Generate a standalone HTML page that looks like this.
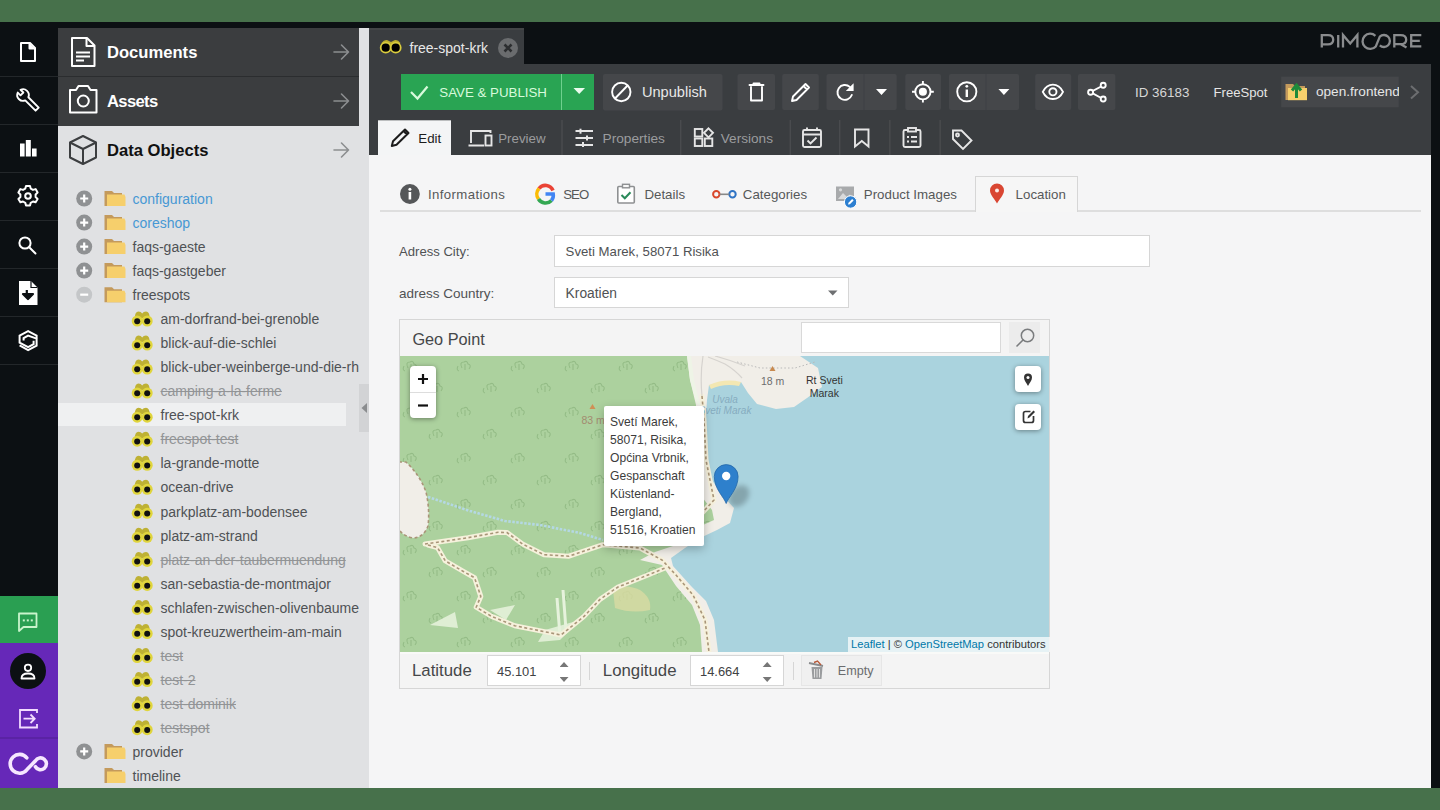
<!DOCTYPE html>
<html><head><meta charset="utf-8">
<style>
*{box-sizing:border-box;margin:0;padding:0}
html,body{width:1440px;height:810px;overflow:hidden}
body{position:relative;background:#47714b;font-family:"Liberation Sans",sans-serif;}
.a{position:absolute}
#frame{left:0;top:22px;width:1440px;height:766px;background:#0c1013}
/* sidebar */
.sep{position:absolute;left:0;width:58px;height:1px;background:#23272a}
/* tree panel */
.ph{position:absolute;left:58px;width:301px;height:48px;background:#3b3d3f;color:#fff;font-weight:bold;font-size:16.6px}
.ph span{position:absolute;left:49px;top:15px}
.arr{position:absolute;left:276px;top:15px}
#tree{left:58px;top:28px;width:311px;height:760px;background:#e0e1e3}
.row{position:absolute;left:0;height:24px;width:288px;font-size:14.1px;color:#505355;white-space:nowrap}
.row span{position:absolute;top:4px}
.del{color:#929496;text-decoration:line-through}
.lnk{color:#4797d3}
.tt{position:absolute;font-size:14px;color:#4f5255;white-space:nowrap;line-height:16px}
.tt.lnk{color:#4798d4}
.tt.del{color:#929496;text-decoration:line-through}
</style></head><body>
<div id="frame" class="a"></div>

<!-- LEFT SIDEBAR -->
<div class="a" style="left:0;top:22px;width:58px;height:766px;background:#0c1013"></div>
<div class="sep" style="top:76px"></div>
<div class="sep" style="top:124px"></div>
<div class="sep" style="top:172px"></div>
<div class="sep" style="top:220px"></div>
<div class="sep" style="top:268px"></div>
<div class="sep" style="top:316px"></div>
<div class="sep" style="top:364px"></div>

<svg class="a" style="left:0;top:22px" width="58" height="350" viewBox="0 22 58 350">
 <g fill="none" stroke="#fff" stroke-width="2" stroke-linejoin="round" stroke-linecap="round">
  <!-- doc -->
  <path d="M21 43 H30 L35 48 V61 H21 Z"/>
  <path d="M29.5 43.5 V48.5 H34.5" fill="#fff"/>
  <!-- wrench -->
  <path d="M28.36 97.24 L38.7 107.58 L35.58 110.7 L25.24 100.36 A5.8 5.8 0 0 1 17.74 92.56 L20.53 95.35 L23.35 92.53 L20.56 89.74 A5.8 5.8 0 0 1 28.36 97.24 Z" stroke-width="1.9"/>
  <!-- gear -->
  <circle cx="28" cy="196" r="2.8"/>
  <path d="M26 186 h4 l0.7 2.6 l2.3 1.3 l2.6 -0.8 l2 3.4 l-2 1.9 v2.6 l2 1.9 l-2 3.4 l-2.6 -0.8 l-2.3 1.3 l-0.7 2.6 h-4 l-0.7 -2.6 l-2.3 -1.3 l-2.6 0.8 l-2 -3.4 l2 -1.9 v-2.6 l-2 -1.9 l2 -3.4 l2.6 0.8 l2.3 -1.3 z"/>
  <!-- search -->
  <circle cx="25" cy="243" r="5.6"/>
  <path d="M29.2 247.2 L35.5 253.5"/>
  <!-- layers -->
  <path d="M36.6 338.2 V335.6 L28.1 331.2 L19.6 335.6 V342.7 L28.1 347.1 L33.6 344.1 V340.8" stroke-width="2" stroke-linejoin="miter" stroke-linecap="butt"/>
  <path d="M19.6 345.3 L28.1 350.1 L36.6 345.6 V338.6 L28.1 335.6 L23.6 338.2 V340.4" stroke-width="2" stroke-linejoin="miter" stroke-linecap="butt"/>
 </g>
 <g fill="#fff">
  <rect x="20" y="143.5" width="4.6" height="13"/>
  <rect x="25.8" y="140" width="5" height="16.5"/>
  <rect x="32" y="148.5" width="4.6" height="8"/>
  <path d="M19 281 H31 L37.5 287.5 V305 H19 Z"/>
 </g>
 <path d="M31 281 V287.5 H37.5" fill="none" stroke="#0c1013" stroke-width="1.2"/>
 <path d="M26.8 290 V297 M23 294 L28 299 L33 294 Z" stroke="#0c1013" stroke-width="2.2" fill="#0c1013" stroke-linejoin="round"/>
</svg>

<!-- sidebar bottom -->
<div class="a" style="left:0;top:596px;width:58px;height:47px;background:#2a9f52"></div>
<div class="a" style="left:0;top:643px;width:58px;height:145px;background:#6628b8"></div>
<div class="a" style="left:0;top:737px;width:58px;height:2px;background:#5a23a4"></div>
<svg class="a" style="left:0;top:596px" width="58" height="192" viewBox="0 596 58 192">
 <path d="M19 613.5 H36.5 V627 H23.5 L19 631 Z" fill="none" stroke="#c9f4cc" stroke-width="1.8" stroke-linejoin="round"/>
 <g fill="#c9f4cc"><rect x="22.8" y="619.4" width="2" height="2"/><rect x="26.8" y="619.4" width="2" height="2"/><rect x="30.8" y="619.4" width="2" height="2"/></g>
 <circle cx="28" cy="671" r="18" fill="#0c1013"/>
 <circle cx="28" cy="667.8" r="3.2" fill="none" stroke="#fff" stroke-width="1.8"/>
 <path d="M21.5 678.5 Q21.5 673.5 28 673.5 Q34.5 673.5 34.5 678.5 Z" fill="none" stroke="#fff" stroke-width="1.8" stroke-linejoin="round"/>
 <path d="M37 713 V710 H20 V727.5 H37 V724" fill="none" stroke="#f3dcff" stroke-width="1.8"/>
 <path d="M23.5 718.7 H34.5 M30.5 714.5 L34.7 718.7 L30.5 723" fill="none" stroke="#f3dcff" stroke-width="1.8"/>
 <path d="M26.8 757.8 A9.4 9.4 0 1 0 26.8 769.8 L35.4 760.85 A5.9 5.9 0 1 1 35.4 766.75" fill="none" stroke="#f6e6ff" stroke-width="3.6" stroke-linecap="round"/>
</svg>

<!-- TREE PANEL -->
<div id="tree" class="a"></div>
<div class="ph" style="top:28px"><span>Documents</span></div>
<div class="a" style="left:58px;top:76px;width:301px;height:1px;background:#2b2d2f"></div>
<div class="ph" style="top:77px;height:49px"><span style="top:15px;letter-spacing:-0.65px">Assets</span></div>
<div class="ph" style="top:126px;background:transparent;color:#111"><span>Data Objects</span></div>


<svg class="a" style="left:58px;top:28px" width="301" height="146" viewBox="58 28 301 146">
 <g fill="none" stroke="#fff" stroke-width="2" stroke-linejoin="round">
  <path d="M72 38 H87 L94.5 45.5 V66 H72 Z"/>
  <path d="M86.5 38.5 V46 H94" />
  <path d="M76 52.5 H90 M76 56.5 H90 M76 60.5 H84" stroke-width="1.8"/>
  <path d="M70 90 H76 L78.5 86 H88 L90.5 90 H96.5 V112.5 H70 Z"/>
  <circle cx="83.3" cy="101" r="5.5"/>
 </g>
 <g fill="none" stroke="#3c3e40" stroke-width="2" stroke-linejoin="round">
  <path d="M83 136 L96 142.5 V157.5 L83 164 L70 157.5 V142.5 Z"/>
  <path d="M70 142.5 L83 149 L96 142.5 M83 149 V164"/>
 </g>
 <g fill="none" stroke="#8c8e90" stroke-width="1.6" stroke-linecap="round" stroke-linejoin="round">
  <path d="M334 52 H348.5 M341.5 45 L348.5 52 L341.5 59"/>
  <path d="M334 101 H348.5 M341.5 94 L348.5 101 L341.5 108"/>
  <path d="M334 150 H348.5 M341.5 143 L348.5 150 L341.5 157"/>
 </g>
</svg>
<!-- collapse handle -->
<div class="a" style="left:359px;top:384px;width:10px;height:48px;background:#d2d3d5"></div>
<svg class="a" style="left:359px;top:384px" width="10" height="48"><path d="M8 19 L2.5 24 L8 29 Z" fill="#8a8c8e"/></svg>
<!--TREE-->
<!-- MAIN TOP -->
<div class="a" style="left:369px;top:28px;width:155px;height:36px;background:#3a3d40;border-top:2px solid #434547"></div>
<div class="a" style="left:369px;top:64px;width:1062px;height:91px;background:#3a3d40"></div>
<div class="a" style="left:369px;top:155px;width:1062px;height:633px;background:#f5f5f6"></div>
<div class="a" style="left:409.5px;top:40px;font-size:14px;color:#e8e8e8;line-height:16px">free-spot-krk</div>
<svg class="a" style="left:369px;top:28px" width="1062" height="127" viewBox="369 28 1062 127">
 <path d="M381.5 43 Q385 38.5 389 41 L391 42 L393 41 Q397 38.5 400.5 43 L399 45 H383 Z" fill="#bdae2e"/>
 <circle cx="385.7" cy="47.7" r="5" fill="#000" stroke="#dacd3e" stroke-width="1.8"/>
 <circle cx="395.7" cy="47.7" r="5" fill="#000" stroke="#dacd3e" stroke-width="1.8"/>
 <circle cx="508" cy="48" r="10" fill="#6a6c6e"/>
 <path d="M504.5 44.5 L511.5 51.5 M511.5 44.5 L504.5 51.5" stroke="#2c2e30" stroke-width="2.6"/>
 <!-- buttons -->
 <rect x="401" y="74" width="193" height="36" fill="#29a453"/>
 <rect x="561" y="74" width="1" height="36" fill="#6fd08e"/>
 <path d="M411 92 L417.5 98.5 L427.5 86.5" fill="none" stroke="#d8fadc" stroke-width="2.2"/>
 <path d="M573.5 88 H585 L579.2 94 Z" fill="#eafbee"/>
 <rect x="603" y="74" width="119.5" height="36.5" rx="2" fill="#45474a"/>
 <circle cx="621.3" cy="92" r="9.2" fill="none" stroke="#fff" stroke-width="1.9"/>
 <path d="M615 98.5 L627.6 85.5" stroke="#fff" stroke-width="1.9"/>
 <rect x="737.5" y="74" width="37.5" height="36" rx="2" fill="#45474a"/>
 <rect x="782.2" y="74" width="36.6" height="36" rx="2" fill="#45474a"/>
 <rect x="826.5" y="74" width="70.2" height="36" rx="2" fill="#45474a"/>
 <rect x="905.3" y="74" width="35.7" height="36" rx="2" fill="#45474a"/>
 <rect x="949" y="74" width="70" height="36" rx="2" fill="#45474a"/>
 <rect x="1035.2" y="74" width="36" height="36" rx="2" fill="#45474a"/>
 <rect x="1078" y="74" width="37.4" height="36" rx="2" fill="#45474a"/>
 <rect x="863.5" y="74" width="1" height="36" fill="#3f4144"/><rect x="985.5" y="74" width="1" height="36" fill="#3f4144"/>
 <rect x="1281.2" y="76.6" width="117.5" height="30.7" fill="#45474a"/>
 <g fill="none" stroke="#fff" stroke-width="1.9" stroke-linejoin="round" stroke-linecap="round">
  <path d="M749.5 85 H763.5 M753.5 85 V83.5 H759.5 V85"/>
  <path d="M751 87 V100.5 H762 V87"/>
  <path d="M792 101 L793 96.5 L805.5 84 L809 87.5 L796.5 100 Z M803.5 86 L807 89.5"/>
  <path d="M851.8 95 A7.4 7.4 0 1 1 849.8 86.9"/>
 </g>
 <path d="M853.6 83.2 V91 H845.8 Z" fill="#fff"/>
 <path d="M876 89 H887 L881.5 95 Z M998.4 89 H1009.4 L1003.9 95 Z" fill="#fff"/>
 <g fill="none" stroke="#fff" stroke-width="1.9">
  <circle cx="922.9" cy="91.8" r="7.6"/>
  <path d="M922.9 81 V84.5 M922.9 99 V102.5 M912 91.8 H915.5 M930.3 91.8 H933.8"/>
  <circle cx="966.8" cy="91.8" r="9.6"/>
  <path d="M1042.8 91.8 C1047.5 82.2 1058.3 82.2 1063 91.8 C1058.3 101.4 1047.5 101.4 1042.8 91.8 Z"/>
  <circle cx="1052.9" cy="91.8" r="3.6"/>
  <path d="M1090.5 92.2 L1103 85.5 M1090.5 92.2 L1103 99"/>
 </g>
 <circle cx="922.9" cy="91.8" r="4" fill="#fff"/>
 <path d="M966.8 89.5 V97" stroke="#fff" stroke-width="2.4"/>
 <circle cx="966.8" cy="86.3" r="1.4" fill="#fff"/>
 <g fill="#45474a" stroke="#fff" stroke-width="1.9">
  <circle cx="1103.2" cy="85.3" r="2.5"/><circle cx="1090.6" cy="92.2" r="2.5"/><circle cx="1103.2" cy="99" r="2.5"/>
 </g>
 <!-- open.frontend folder -->
 <path d="M1285.5 84 H1293 L1295 86 H1305 V100 H1285.5 Z" fill="#c49a5c"/>
 <path d="M1288 88 H1307 V100.2 H1288 Z" fill="#f6cf6c"/>
 <path d="M1296.5 98 V86.5 M1292 90.5 L1296.5 85 L1301 90.5" stroke="#1e8a3a" stroke-width="3" fill="none"/>
 <path d="M1411 86 L1418 92.3 L1411 98.6" fill="none" stroke="#6c6e70" stroke-width="2"/>
 <!-- tabs row -->
 <rect x="378" y="120.3" width="73" height="35" fill="#f4f5f6"/>
 <g fill="#505254"><rect x="561.5" y="120" width="1" height="35"/><rect x="680.3" y="120" width="1" height="35"/><rect x="789.7" y="120" width="1" height="35"/><rect x="839.3" y="120" width="1" height="35"/><rect x="889.4" y="120" width="1" height="35"/><rect x="939.6" y="120" width="1" height="35"/></g>
 <g fill="none" stroke="#1c1c1c" stroke-width="2" stroke-linejoin="round">
  <path d="M391.8 146 L393 141.3 L405 129.5 L408.5 133 L396.5 144.8 Z M403.5 131 L407 134.5"/>
 </g>
 <g fill="none" stroke="#e6e6e6" stroke-width="1.9">
  <path d="M471 143 V131 H490.5 V133 M468.5 145.5 H484"/>
  <rect x="485.5" y="135.5" width="6" height="10"/>
  <path d="M575.5 131 H593 M575.5 138 H593 M575.5 145 H593"/>
  <rect x="694.8" y="138.5" width="7.5" height="7.5"/><rect x="704.8" y="138.5" width="7.5" height="7.5"/><rect x="694.8" y="129" width="7.5" height="7.5"/>
  <path d="M708.5 128.3 L713 132.8 L708.5 137.3 L704 132.8 Z"/>
  <rect x="803" y="130" width="18" height="17" rx="1.5"/><path d="M803 134.5 H821 M807 127.5 V131 M817 127.5 V131 M807.5 140.5 L810.5 143.5 L816.5 137.5"/>
  <path d="M855 129.5 H868.5 V146.5 L861.8 141 L855 146.5 Z"/>
  <rect x="903.5" y="130" width="17" height="17" rx="1.5"/><rect x="908" y="128" width="8" height="3.5" fill="#3b3d3f"/><path d="M907 137 H909 M911 137 H917 M907 141.5 H909 M911 141.5 H917"/>
  <path d="M953 130.5 H961.5 L971.5 140.5 L963 149 L953 139 Z"/><circle cx="957.5" cy="135" r="1.5"/>
 </g>
 <g fill="#e6e6e6"><rect x="579.5" y="128.7" width="2" height="5"/><rect x="586" y="135.5" width="2" height="5"/><rect x="582" y="142" width="2" height="5"/></g>
</svg>
<div class="a" style="left:439.3px;top:84.5px;font-size:13.3px;color:#d8fadc;line-height:16px">SAVE &amp; PUBLISH</div>
<div class="a" style="left:641.9px;top:84px;font-size:14.6px;color:#e8e8e8;line-height:16px">Unpublish</div>
<div class="a" style="left:1135px;top:84.5px;font-size:13.4px;color:#d6d6d6;line-height:16px">ID 36183</div>
<div class="a" style="left:1213.6px;top:84.5px;font-size:13.1px;color:#e6e6e6;line-height:16px">FreeSpot</div>
<div class="a" style="left:1281px;top:76px;width:117.7px;height:31px;overflow:hidden"><div class="a" style="left:35px;top:8px;font-size:13.6px;color:#e6e6e6;line-height:16px;white-space:nowrap">open.frontend.shop</div></div>
<div class="a" style="left:418.3px;top:131px;font-size:13.3px;color:#1c1c1c;line-height:16px">Edit</div>
<div class="a" style="left:498.2px;top:131px;font-size:13.3px;color:#9a9c9e;line-height:16px">Preview</div>
<div class="a" style="left:602.5px;top:131px;font-size:13.7px;color:#9a9c9e;line-height:16px">Properties</div>
<div class="a" style="left:720.8px;top:131px;font-size:13.6px;color:#9a9c9e;line-height:16px">Versions</div>
<!-- PIMCORE logo -->
<svg class="a" style="left:1310px;top:26px" width="120" height="30" viewBox="0 0 120 30">
 <g fill="none" stroke="#8a8c8e" stroke-width="2.3">
  <path d="M11.8 21.5 V9.2 H18 Q23.2 9.2 23.2 13.8 Q23.2 18.4 18 18.4 H11.8"/>
  <path d="M28.2 9 V21.5"/>
  <path d="M33 21.5 V9 L40.2 17.5 L47.4 9 V21.5"/>
  <path d="M65.4 9.8 A7.6 7.6 0 1 0 65.8 20.4 L69.8 10.6 A6 6 0 1 1 69.8 19.4"/>
  <path d="M84.3 21.5 V9.2 H90.5 Q96.2 9.2 96.2 13.7 Q96.2 18.2 90.5 18.2 H84.3 M90.8 18.2 L96.5 21.5"/>
  <path d="M111.3 9.2 H101.2 V20.4 H111.3 M101.2 14.8 H109.8"/>
 </g>
</svg>

<div class="a" style="left:0;top:0;width:359px;height:788px;overflow:hidden">
<div class="a" style="left:58px;top:403.4px;width:288px;height:23px;background:#eff0f1"></div>
<div class="tt lnk" style="left:132.5px;top:191.00px">configuration</div>
<div class="tt lnk" style="left:132.5px;top:215.04px">coreshop</div>
<div class="tt " style="left:132.5px;top:239.08px">faqs-gaeste</div>
<div class="tt " style="left:132.5px;top:263.12px">faqs-gastgeber</div>
<div class="tt " style="left:132.5px;top:287.16px">freespots</div>
<div class="tt " style="left:160.5px;top:311.20px">am-dorfrand-bei-grenoble</div>
<div class="tt " style="left:160.5px;top:335.24px">blick-auf-die-schlei</div>
<div class="tt " style="left:160.5px;top:359.28px">blick-uber-weinberge-und-die-rhein</div>
<div class="tt del" style="left:160.5px;top:383.32px">camping-a-la-ferme</div>
<div class="tt " style="left:160.5px;top:407.36px">free-spot-krk</div>
<div class="tt del" style="left:160.5px;top:431.40px">freespot-test</div>
<div class="tt " style="left:160.5px;top:455.44px">la-grande-motte</div>
<div class="tt " style="left:160.5px;top:479.48px">ocean-drive</div>
<div class="tt " style="left:160.5px;top:503.52px">parkplatz-am-bodensee</div>
<div class="tt " style="left:160.5px;top:527.56px">platz-am-strand</div>
<div class="tt del" style="left:160.5px;top:551.60px">platz-an-der-taubermuendung</div>
<div class="tt " style="left:160.5px;top:575.64px">san-sebastia-de-montmajor</div>
<div class="tt " style="left:160.5px;top:599.68px">schlafen-zwischen-olivenbaumer</div>
<div class="tt " style="left:160.5px;top:623.72px">spot-kreuzwertheim-am-main</div>
<div class="tt del" style="left:160.5px;top:647.76px">test</div>
<div class="tt del" style="left:160.5px;top:671.80px">test-2</div>
<div class="tt del" style="left:160.5px;top:695.84px">test-dominik</div>
<div class="tt del" style="left:160.5px;top:719.88px">testspot</div>
<div class="tt " style="left:132.5px;top:743.92px">provider</div>
<div class="tt " style="left:132.5px;top:767.96px">timeline</div>
</div>
<svg class="a" style="left:0;top:0" width="370" height="810">
<defs>
<g id="plus"><circle cx="84.2" cy="11.5" r="8" fill="#8f9193"/><path d="M84.2 7.5v8M80.2 11.5h8" stroke="#fff" stroke-width="2.2"/></g>
<g id="minus"><circle cx="84.2" cy="11.5" r="8" fill="#c4c6c8"/><path d="M80.2 11.5h8" stroke="#fff" stroke-width="2.2"/></g>
<g id="folder"><path d="M104.5 4 H112 L114 6 H122 V19 H104.5 Z" fill="#c49a5c"/><path d="M107 7.5 H124.5 L125.5 10 V19 H107 Z" fill="#f6cf6c"/></g>
<g id="bino"><path d="M134.8 11 Q134.8 4.3 138.5 4.3 Q141 4.3 142.2 6.2 Q143.4 4.3 146 4.3 Q149.7 4.3 149.7 11 Z" fill="#beb134"/><circle cx="137.2" cy="13.8" r="5.5" fill="#e0d53c"/><circle cx="147.2" cy="13.8" r="5.5" fill="#e0d53c"/><circle cx="137.2" cy="14" r="3" fill="#111"/><circle cx="147.2" cy="14" r="3" fill="#111"/></g>
</defs>
<use href="#plus" y="187.00"/>
<use href="#folder" y="187.00"/>
<use href="#plus" y="211.04"/>
<use href="#folder" y="211.04"/>
<use href="#plus" y="235.08"/>
<use href="#folder" y="235.08"/>
<use href="#plus" y="259.12"/>
<use href="#folder" y="259.12"/>
<use href="#minus" y="283.16"/>
<use href="#folder" y="283.16"/>
<use href="#bino" y="307.20"/>
<use href="#bino" y="331.24"/>
<use href="#bino" y="355.28"/>
<use href="#bino" y="379.32"/>
<use href="#bino" y="403.36"/>
<use href="#bino" y="427.40"/>
<use href="#bino" y="451.44"/>
<use href="#bino" y="475.48"/>
<use href="#bino" y="499.52"/>
<use href="#bino" y="523.56"/>
<use href="#bino" y="547.60"/>
<use href="#bino" y="571.64"/>
<use href="#bino" y="595.68"/>
<use href="#bino" y="619.72"/>
<use href="#bino" y="643.76"/>
<use href="#bino" y="667.80"/>
<use href="#bino" y="691.84"/>
<use href="#bino" y="715.88"/>
<use href="#plus" y="739.92"/>
<use href="#folder" y="739.92"/>
<use href="#folder" y="763.96"/>
</svg>

<!-- CONTENT -->
<div class="a" style="left:380px;top:210px;width:1041px;height:2px;background:#dedede"></div>
<div class="a" style="left:974.5px;top:176px;width:103.5px;height:36px;background:#f6f6f6;border:1px solid #d6d6d6;border-bottom:none"></div>
<svg class="a" style="left:369px;top:160px" width="720" height="60" viewBox="369 160 720 60">
 <circle cx="409.9" cy="194" r="9.9" fill="#555759"/>
 <circle cx="409.9" cy="189.3" r="1.5" fill="#fff"/><rect x="408.6" y="192" width="2.6" height="7.5" fill="#fff"/>
 <g fill="none" stroke-width="3.6">
  <path d="M553 190.5 A8.2 8.2 0 0 0 539 188.5" stroke="#ea4335"/>
  <path d="M539 188.5 A8.2 8.2 0 0 0 538.5 199" stroke="#fbbc05"/>
  <path d="M538.5 199 A8.2 8.2 0 0 0 551.5 200.5" stroke="#34a853"/>
  <path d="M551.5 200.5 A8.2 8.2 0 0 0 553.2 194 H545.5" stroke="#4285f4"/>
 </g>
 <rect x="617.8" y="186.5" width="16.5" height="16.5" rx="1" fill="#fff" stroke="#8e9092" stroke-width="1.6"/>
 <rect x="622.5" y="184.3" width="7" height="3.5" fill="#f6f6f6" stroke="#8e9092" stroke-width="1.4"/>
 <path d="M621.5 195 L624.8 198.3 L630.5 192.2" fill="none" stroke="#2a8a5a" stroke-width="2"/>
 <circle cx="716.3" cy="194.3" r="3.2" fill="none" stroke="#d9472b" stroke-width="2"/>
 <circle cx="732.5" cy="194.3" r="3.2" fill="none" stroke="#2f73c4" stroke-width="2"/>
 <path d="M719.5 194.3 H729.3" stroke="#888" stroke-width="1.6"/>
 <rect x="836" y="186.5" width="18" height="14.5" fill="#a8aaac"/>
 <path d="M838 199 L843 193 L847 197 L850 194.5 L853 199 Z" fill="#d9dadb"/><circle cx="840.5" cy="189.8" r="1.6" fill="#d9dadb"/>
 <circle cx="850.6" cy="202" r="6.2" fill="#2c7fd1" stroke="#fff" stroke-width="1"/>
 <path d="M848 204.6 L848.5 202.8 L852.2 199.1 L853.6 200.5 L849.9 204.2 Z" fill="#fff"/>
 <path d="M997 203.5 C995 199.5 990 195 990 190.5 A7 7 0 0 1 1004 190.5 C1004 195 999 199.5 997 203.5 Z" fill="#d94632"/>
 <circle cx="997" cy="190.5" r="2" fill="#fbeae6"/>
</svg>
<div class="a" style="left:427.9px;top:187px;font-size:13.2px;letter-spacing:0.4px;color:#565859;line-height:16px">Informations</div>
<div class="a" style="left:563.3px;top:187px;font-size:13.2px;letter-spacing:-1px;color:#565859;line-height:16px">SEO</div>
<div class="a" style="left:644.4px;top:187px;font-size:13.3px;color:#565859;line-height:16px">Details</div>
<div class="a" style="left:742.8px;top:187px;font-size:13.3px;color:#565859;line-height:16px">Categories</div>
<div class="a" style="left:863.8px;top:187px;font-size:13.3px;color:#565859;line-height:16px">Product Images</div>
<div class="a" style="left:1015.6px;top:187px;font-size:13.3px;color:#565859;line-height:16px">Location</div>

<div class="a" style="left:399px;top:243.5px;font-size:13.1px;color:#505254;line-height:16px">Adress City:</div>
<div class="a" style="left:399px;top:285.5px;font-size:13.5px;color:#505254;line-height:16px">adress Country:</div>
<div class="a" style="left:554.4px;top:235px;width:596px;height:31.6px;background:#fff;border:1px solid #d6d6d6"></div>
<div class="a" style="left:565.6px;top:244px;font-size:13.2px;color:#505254;line-height:16px">Sveti Marek, 58071 Risika</div>
<div class="a" style="left:554.4px;top:277.2px;width:295px;height:31.3px;background:#fff;border:1px solid #d6d6d6"></div>
<div class="a" style="left:565.6px;top:286px;font-size:13.8px;color:#505254;line-height:16px">Kroatien</div>
<svg class="a" style="left:826px;top:289px" width="14" height="8"><path d="M2 1.5 H11.5 L6.75 6.5 Z" fill="#6e7072"/></svg>

<!-- GEO PANEL -->
<div class="a" style="left:399px;top:319px;width:651px;height:370px;background:#f4f4f4;border:1px solid #d6d6d6"></div>
<div class="a" style="left:412.4px;top:329.5px;font-size:16.3px;color:#454749;line-height:18px">Geo Point</div>
<div class="a" style="left:801.3px;top:322.2px;width:199.7px;height:31.3px;background:#fff;border:1px solid #d9d9d9"></div>
<div class="a" style="left:1009.4px;top:322.2px;width:31px;height:31.3px;background:#ececec"></div>
<svg class="a" style="left:1009px;top:322px" width="32" height="32"><circle cx="18.5" cy="13.5" r="6.2" fill="none" stroke="#7a7c7e" stroke-width="1.5"/><path d="M14 18 L8 24" stroke="#7a7c7e" stroke-width="1.6" stroke-linecap="round"/></svg>
<!--MAP--><svg class="a" style="left:400px;top:356px" width="649" height="296" viewBox="400 356 649 296">
 <defs>
  <clipPath id="mc"><rect x="400" y="356" width="649" height="296"/></clipPath>
  <pattern id="trees" x="400" y="356" width="54" height="46" patternUnits="userSpaceOnUse">
   <g fill="none" stroke="#94bc86" stroke-width="1.1">
    <path d="M8 12 q-3 -6 2 -6 q3 -2 4 2 q4 1 1 5 M11 8 v6 M4 10 q-2 4 1 5"/>
    <path d="M34 34 q-3 -6 2 -6 q3 -2 4 2 q4 1 1 5 M37 30 v6 M30 32 q-2 4 1 5"/>
   </g>
  </pattern>
  <clipPath id="fc"><path d="M400 356 H687 L690 380 L696 405 L695 440 L697 470 L702 497 L712 510 L714 520 L703 525 L690 536 L676 545 L655 552 L640 560 L662 565 L676 586 L692 605 L700 625 L702 652 H400 V531 Q405 537 414 538 Q424 537 428 526 Q430 510 426 492 Q420 475 406 462 L400 462 Z"/></clipPath>
  <filter id="bl" x="-50%" y="-50%" width="200%" height="200%"><feGaussianBlur stdDeviation="2.5"/></filter>
 </defs>
 <g clip-path="url(#mc)">
  <rect x="400" y="356" width="649" height="296" fill="#aad3de"/>
  <!-- land (beige) mass: everything west of coast -->
  <path d="M400 356 H800 L818 368 L822 387 L807 398 L794 407 L776 409 L757 404 L748 393 L741 382 L709 385 L707 400 L705 430 L706 460 L712 480 L722 495 L734 508 L730 523 L717 530 L700 538 L685 548 L671 558 L673 566 L691 586 L706 601 L714 620 L718 652 H400 Z" fill="#f1eee8"/>
  <!-- beach -->
  <path d="M709 385 Q725 378 741 382 L739 386 Q724 383 711 389 Z" fill="#f3e7b2"/>
  <!-- forest -->
  <path d="M400 356 H687 L690 380 L696 405 L695 440 L697 470 L702 497 L712 510 L714 520 L703 525 L690 536 L676 545 L655 552 L640 560 L662 565 L676 586 L692 605 L700 625 L702 652 H400 V531 Q405 537 414 538 Q424 537 428 526 Q430 510 426 492 Q420 475 406 462 L400 462 Z" fill="#acd19e"/>
  <rect x="400" y="356" width="310" height="296" fill="url(#trees)" clip-path="url(#fc)"/>
  <!-- grass patch -->
  <path d="M613 590 Q625 583 640 590 Q652 598 650 610 Q632 614 615 608 Z" fill="#d9dba3" opacity="0.8"/>
  <path d="M490 610 L515 605 L506 620 Z M545 630 L580 620 L560 640 L538 642 Z M430 625 L455 612 L458 628 Z" fill="#dfeed4"/>
  <path d="M563 590 L566 630 M557 598 L560 636" stroke="#e6f2dc" stroke-width="3"/>
  <!-- roads -->
  <g fill="none" stroke-linejoin="round" stroke-linecap="round">
   <path id="r1" d="M400 531 Q405 537 414 538 Q424 537 428 526 Q430 510 426 492 Q420 475 406 462 L400 462"/>
   <path id="r2" d="M425 544 L442 541.6 L468 537.7 L498 532.3 L507 532.5 L522.5 544 L544 554.7 L569 556.2 L603 544.7 L640 548 L662 560 L676 575 L693 595 L705 620 L709 652"/>
   <path id="r3" d="M428 545 L437.6 547.7 L445.3 560.9 L463.8 571.7 L474.6 577.8 L480.8 596.4 L476.2 607.2 L491.6 616.4 L514.7 625.7 L545.6 631.9 L561 635 L584 616.4 L600 599.4 L618 587 L648 575 L665 568"/>
   <path id="r4" d="M428 545 L420 520"/>
   <path id="r5" d="M702 396 L704 420 L706 460 L711 485 L714 500 L703 512 L690 520"/>
   <path id="r6" d="M748 370 L770 364 L800 358"/>
  </g>
  <g fill="none" stroke="#f6f1dc" stroke-width="5" stroke-linejoin="round" stroke-linecap="round">
   <use href="#r2"/><use href="#r3"/><use href="#r5"/>
  </g>
  <g fill="none" stroke="#a99578" stroke-width="1.6" stroke-dasharray="3 2.5" stroke-linejoin="round">
   <use href="#r1"/><use href="#r2"/><use href="#r3"/><use href="#r5"/>
  </g>
  <path d="M737 362 L760 368 L795 368 L815 362" fill="none" stroke="#b9b9b9" stroke-width="1" stroke-dasharray="1.5 2.2"/>
  <path d="M703 356 Q700 375 702 396 M708 357 Q716 360 725 364 Q735 370 742 378 M715 356 Q730 360 745 366" fill="none" stroke="#d6d3cf" stroke-width="1.2"/>
  <path d="M687 356 L690 380 L697 405 L700 405 L694 380 L691 356 Z" fill="#eef4e6"/>
  <!-- stream -->
  <path d="M428 497 L470 511 L505 521 L540 525 L580 533 L603 540" fill="none" stroke="#b4d8e4" stroke-width="2.6" stroke-dasharray="2.5 1.5"/>
  <!-- peaks / labels -->
  <path d="M589.5 409 L592.5 404 L595.5 409 Z" fill="#d08f55"/>
  <path d="M769.5 371 L772.5 366 L775.5 371 Z" fill="#c88a4f"/>
 </g>
</svg>


<!-- map overlays -->
<div class="a" style="left:410px;top:366px;width:26px;height:52px;background:#fff;border-radius:4px;box-shadow:0 1px 5px rgba(0,0,0,0.4)"></div>
<div class="a" style="left:410px;top:391.5px;width:26px;height:1px;background:#ddd"></div>
<svg class="a" style="left:410px;top:366px" width="26" height="52"><path d="M13 8 V18 M8 13 H18" stroke="#111" stroke-width="2.2"/><path d="M8 39.5 H18" stroke="#111" stroke-width="2.2"/></svg>
<div class="a" style="left:1015px;top:366px;width:26px;height:26px;background:#fff;border-radius:4px;box-shadow:0 1px 5px rgba(0,0,0,0.4)"></div>
<div class="a" style="left:1015px;top:404px;width:26px;height:26px;background:#fff;border-radius:4px;box-shadow:0 1px 5px rgba(0,0,0,0.4)"></div>
<svg class="a" style="left:1015px;top:366px" width="26" height="64">
 <path d="M13 20 C11.5 17 9 14.5 9 11.5 A4 4 0 0 1 17 11.5 C17 14.5 14.5 17 13 20 Z" fill="#333"/><circle cx="13" cy="11.5" r="1.5" fill="#fff"/>
 <path d="M15.5 45.5 H10.5 Q8.5 45.5 8.5 47.5 V54.5 Q8.5 56.5 10.5 56.5 H16.5 Q18.5 56.5 18.5 54.5 V50" fill="none" stroke="#333" stroke-width="1.7"/><path d="M12.5 52.5 L13 50 L18.5 44.5 L20 46 L14.5 51.5 Z" fill="#333"/>
</svg>
<!-- marker -->
<svg class="a" style="left:705px;top:456px" width="60" height="56">
 <ellipse cx="34" cy="40" rx="9" ry="12" transform="rotate(40 34 40)" fill="rgba(0,0,0,0.22)" filter="url(#bl)"/>
 <path d="M21.2 47.5 C19 41 9.3 33 9.3 20.5 A11.9 11.9 0 0 1 33.1 20.5 C33.1 33 23.4 41 21.2 47.5 Z" fill="#2e80cc" stroke="#2668a8" stroke-width="0.8"/>
 <circle cx="21.2" cy="20" r="4.2" fill="#fff"/>
</svg>
<!-- popup -->
<div class="a" style="z-index:2;left:603.5px;top:406px;width:100px;height:140px;background:#fff;border-radius:2px;box-shadow:0 3px 10px rgba(0,0,0,0.25)"></div>
<div class="a" style="z-index:3;left:610px;top:413px;font-size:12.1px;color:#3c3c3c;line-height:18px;white-space:nowrap">Svetí Marek,<br>58071, Risika,<br>Općina Vrbnik,<br>Gespanschaft<br>Küstenland-<br>Bergland,<br>51516, Kroatien</div>
<!-- attribution -->
<div class="a" style="left:847.5px;top:636.5px;width:202px;height:15.5px;background:rgba(255,255,255,0.7)"></div>
<div class="a" style="left:851px;top:638px;font-size:11.2px;color:#333;line-height:13px;white-space:nowrap"><span style="color:#0078a8">Leaflet</span> | © <span style="color:#0078a8">OpenStreetMap</span> contributors</div>
<div class="a" style="left:581.4px;top:413.5px;font-size:10.5px;color:#a38b70;line-height:12px;white-space:nowrap">83 m</div>
<div class="a" style="left:761px;top:375px;font-size:10.5px;color:#6d6d6d;line-height:12px;white-space:nowrap">18 m</div>
<div class="a" style="left:806px;top:374px;font-size:10.5px;color:#333;line-height:12.5px;white-space:nowrap;text-align:center">Rt Sveti<br>Marak</div>
<div class="a" style="left:693px;top:393.5px;width:64px;font-size:10px;color:#86acbf;line-height:11px;white-space:nowrap;font-style:italic;text-align:center">Uvala<br>Sveti Marak</div>
<div class="a" style="left:400px;top:652px;width:649px;height:2px;background:#f9faf8"></div>
<div class="a" style="left:412px;top:662px;font-size:16.8px;color:#454749;line-height:18px">Latitude</div>
<div class="a" style="left:486.6px;top:654.8px;width:94.2px;height:31.4px;background:#fff;border:1px solid #d6d6d6"></div>
<div class="a" style="left:497px;top:663.5px;font-size:12.9px;color:#404244;line-height:16px">45.101</div>
<div class="a" style="left:589.3px;top:662px;width:1px;height:18px;background:#d6d6d6"></div>
<div class="a" style="left:602.8px;top:662px;font-size:16.8px;color:#454749;line-height:18px">Longitude</div>
<div class="a" style="left:689.8px;top:654.8px;width:94.4px;height:31.4px;background:#fff;border:1px solid #d6d6d6"></div>
<div class="a" style="left:700px;top:663.5px;font-size:12.9px;color:#404244;line-height:16px">14.664</div>
<div class="a" style="left:793.3px;top:662px;width:1px;height:18px;background:#d6d6d6"></div>
<div class="a" style="left:801.4px;top:655px;width:80.4px;height:31px;background:#f0f0f0;border:1px solid #e6e6e6"></div>
<div class="a" style="left:837.8px;top:663px;font-size:12.6px;color:#6a6c6e;line-height:16px">Empty</div>
<svg class="a" style="left:560px;top:654px" width="240" height="34" viewBox="560 654 240 34">
 <path d="M559.5 667 H568.5 L564 662 Z M559.5 677 H568.5 L564 682 Z M762.7 667 H771.7 L767.2 662 Z M762.7 677 H771.7 L767.2 682 Z" fill="#777"/>
</svg>
<svg class="a" style="left:805px;top:657px" width="26" height="28">
 <path d="M4 6 L18 9" stroke="#8a8c8e" stroke-width="2"/>
 <path d="M9 5.5 L12.5 4 L16 8" fill="none" stroke="#b85a3a" stroke-width="1.4"/>
 <path d="M6.5 10 H17.5 L16.5 22 H7.5 Z" fill="#9a9c9e"/>
 <path d="M9.5 12 V20.5 M12 12 V20.5 M14.5 12 V20.5" stroke="#e0e0e0" stroke-width="1"/>
</svg>

</body></html>
